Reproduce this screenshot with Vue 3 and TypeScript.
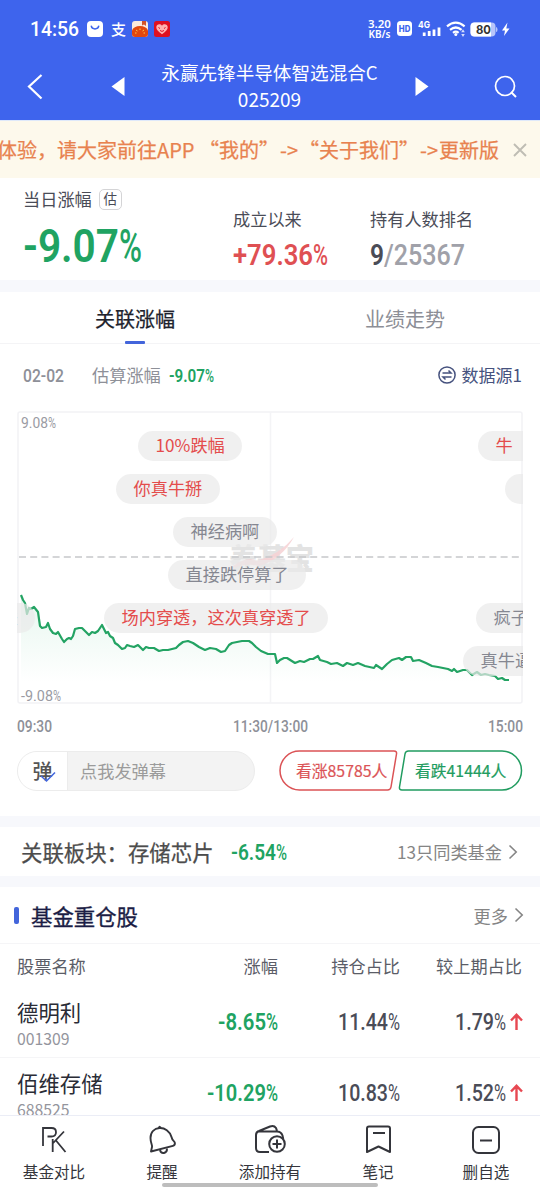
<script setup lang="ts">
import { h, type FunctionalComponent } from 'vue'

interface FigureProps {
  t: string
  s: number
  w: number
  p?: number
  wt?: number
}

// Condensed figures: the digits fill `w`, an optional percent sign fills `p`.
const Figure: FunctionalComponent<FigureProps> = (props) => {
  const { t, s, w, p = 0, wt = 600 } = props
  const y = s * 0.86
  const common = { y, 'font-size': s, lengthAdjust: 'spacingAndGlyphs', fill: 'currentColor' }
  const kids = [h('text', { ...common, x: 0, textLength: w, 'font-weight': wt }, t)]
  if (p) kids.push(h('text', { ...common, x: w, textLength: p, 'font-weight': wt > 500 ? 500 : 400 }, '%'))
  return h('svg', { class: 'fig', width: w + p, height: s }, kids)
}
Figure.props = ['t', 's', 'w', 'p', 'wt']

const bubbles = [
  { text: '10%跌幅', cls: 'b1 red' },
  { text: '牛', cls: 'b2 red' },
  { text: '你真牛掰', cls: 'b3 red' },
  { text: '', cls: 'b4' },
  { text: '神经病啊', cls: 'b5' },
  { text: '直接跌停算了', cls: 'b6' },
  { text: '场内穿透，这次真穿透了', cls: 'b7 red' },
  { text: '疯子', cls: 'b8' },
  { text: '真牛逼', cls: 'b9' },
  { text: '跌', cls: 'b10' },
]

const line =
  '3,182 5,187 7,190 9,201 11,195 13,196 16,194 20,199 22,213 24,215 28,214 30,210 32,216 35,220 38,221 40,219 44,226 46,229 49,226 51,225 53,226 55,223 57,216 61,215 64,215 68,219 71,222 74,219 77,220 80,218 84,212 88,220 90,219 92,223 95,225 97,230 100,232 104,236 107,235 109,232 112,233 116,234 120,232 123,235 125,237 128,234 131,235 136,235 141,238 145,237 150,237 154,236 158,235 161,232 165,229 170,228 175,230 181,234 187,237 192,235 198,236 203,239 207,238 211,232 214,230 219,229 224,228 231,228 234,230 238,234 243,238 250,241 257,241 259,250 262,247 266,245 269,245 277,250 282,248 286,249 292,246 295,246 300,243 302,247 309,249 313,251 319,250 325,253 329,250 335,252 340,250 347,253 356,255 358,252 364,256 369,251 374,247 381,245 384,247 388,244 393,244 395,248 401,247 408,250 414,253 420,254 430,256 434,258 436,256 439,259 445,257 449,257 454,262 459,259 463,262 467,261 471,262 477,263 480,266 484,265 487,267 491,267'

const stocks = [
  { name: '德明利', code: '001309', chg: '-8.65', cw: 48, pos: '11.44', diff: '1.79' },
  { name: '佰维存储', code: '688525', chg: '-10.29', cw: 59, pos: '10.83', diff: '1.52' },
]
</script>

<template>
  <div class="page">
    <header class="top">
      <div class="status">
        <Figure class="clock" t="14:56" :s="20" :w="49" :wt="500" />
        <svg class="s-bag" width="16" height="16" viewBox="0 0 16 16"><rect width="16" height="16" rx="4" fill="#fff" /><path d="M4.300 5.200c.6 3.600 6.800 3.600 7.400 0" fill="none" stroke="#3e64ed" stroke-width="1.500" stroke-linecap="round" /></svg>
        <span class="s-zhi">支</span>
        <svg class="s-app" width="16" height="16" viewBox="0 0 16 16"><rect width="16" height="16" rx="3" fill="#fbe9dc" /><path d="M0 12V9.500C1 6.500 4 5 8 5s7 1.500 8 4.500V13q0 3-3 3H3q-3 0-3-3z" fill="#e2470f" /><path d="M10 0h4v5l-2-1.500-2 1z" fill="#d4532a" /><path d="M4 9l1.500 1M8 7.500V9M12 9l-1.500 1M3 12h1.500M11.500 12H13" stroke="#ffc94a" stroke-width="1" /></svg>
        <svg class="s-heart" width="16" height="16" viewBox="0 0 16 16"><rect width="16" height="16" rx="2.500" fill="#df1021" /><path d="M8 13.300C4 10.500 2.300 8.700 2.300 6.300c0-3.200 4-4.200 5.700-1.600 1.700-2.600 5.700-1.600 5.700 1.600 0 2.400-1.700 4.200-5.700 7z" fill="#ffb3b0" /><path d="M4.500 6.500l1.500 1M11.500 6.500l-1.500 1M6 9.500q2 1.800 4 0" fill="none" stroke="#df1021" /></svg>
        <div class="speed"><span>3.20</span><span class="unit">KB/s</span></div>
        <svg class="s-right" width="144" height="20" viewBox="0 0 144 20">
          <rect x="0" y="2" width="15" height="15" rx="3.500" fill="#fff" />
          <text x="1.800" y="12.500" font-size="8.500" font-weight="800" fill="#3e64ed" textLength="11.500" lengthAdjust="spacingAndGlyphs">HD</text>
          <text x="21" y="9" font-size="9.500" font-weight="700" fill="#fff" textLength="12" lengthAdjust="spacingAndGlyphs">4G</text>
          <path d="M27.200 17v-3.500M32.200 17v-5M37 17v-6.500M42 17v-8.500" stroke="#fff" stroke-width="2.800" />
          <g fill="none" stroke="#fff" stroke-width="2.200"><path d="M50 7.300q8.800-7.300 17.600 0" /><path d="M53 10.800q5.800-4.600 11.600 0" /><path d="M56 13.800q2.800-2.200 5.600 0" /></g>
          <circle cx="58.800" cy="15.500" r="1.500" fill="#fff" />
          <path d="M66 10.300l1.800 3h-3.600zM66 18l1.800-3h-3.600z" fill="#d5defc" />
          <rect x="73.500" y="3.500" width="25" height="14" rx="4" fill="#b7c5fa" /><path d="M77.500 3.500H94v14H77.500q-4 0-4-4v-6q0-4 4-4z" fill="#fff" /><path d="M99 8q1.500 0 1.500 2.500T99 13z" fill="#b7c5fa" />
          <text x="79" y="14.500" font-size="11.500" font-weight="700" fill="#343434" textLength="15" lengthAdjust="spacingAndGlyphs">80</text>
          <path d="M110.500 3.500l-5.500 8h3l-1 5.500 5.500-7.500h-3.200z" fill="#fff" />
        </svg>
      </div>
      <div class="nav">
        <svg class="back" width="18" height="28" viewBox="0 0 18 28"><path d="M15.500 2L3 13.500l12.500 12" fill="none" stroke="#fff" stroke-width="2.200" /></svg>
        <svg class="prev" width="14" height="20" viewBox="0 0 14 20"><path d="M13.500 0v19L.5 9.500z" fill="#fff" /></svg>
        <div class="title"><span class="fund">永赢先锋半导体智选混合C</span><span class="num">025209</span></div>
        <svg class="next" width="14" height="20" viewBox="0 0 14 20"><path d="M.5 0v19l13-9.500z" fill="#fff" /></svg>
        <svg class="search" width="24" height="24" viewBox="0 0 24 24"><circle cx="12" cy="11" r="9.500" fill="none" stroke="#fff" stroke-width="1.700" /><path d="M18 17l5 5" stroke="#fff" stroke-width="2" /></svg>
      </div>
    </header>

    <main class="body">
      <div class="notice">
        <span class="notice-text">体验，请大家前往APP “我的”<i>-&gt;</i>“关于我们”<i>-&gt;</i>更新版</span>
        <svg class="close" width="14" height="14" viewBox="0 0 14 14"><path d="M1 1l12 12M13 1L1 13" stroke="#bfbdb4" stroke-width="1.900" /></svg>
      </div>

      <section class="summary">
        <div class="day">
          <div class="label">当日涨幅<span class="tag">估</span></div>
          <Figure class="green" t="-9.07" :s="46" :w="96" :p="23" :wt="600" />
        </div>
        <div class="since">
          <div class="label">成立以来</div>
          <Figure class="red" t="+79.36" :s="29" :w="80" :p="15" />
        </div>
        <div class="rank">
          <div class="label">持有人数排名</div>
          <div class="rank-num"><Figure t="9" :s="29" :w="14" :wt="600" /><Figure class="gray" t="/25367" :s="29" :w="81" :wt="500" /></div>
        </div>
      </section>

      <section class="chart-card">
        <div class="tabs"><div class="tab active">关联涨幅</div><div class="tab">业绩走势</div></div>
        <div class="info">
          <Figure class="date" t="02-02" :s="18" :w="41" :wt="500" />
          <span class="est">估算涨幅</span>
          <Figure class="green rate" t="-9.07" :s="17.500" :w="36" :p="9" />
          <svg class="swap" width="18" height="18" viewBox="0 0 18 18" fill="none" stroke="#46527e" stroke-width="1.500"><circle cx="9" cy="9" r="8.100" /><path d="M4.500 7H13L10.500 4.500M13.500 11H5l2.500 2.500" /></svg>
          <span class="source">数据源1</span>
        </div>
        <div class="chart">
          <svg class="plot" width="506" height="293" viewBox="0 0 506 293">
            <defs><linearGradient id="fade" x1="0" y1="0" x2="0" y2="1"><stop offset="0" stop-color="#20b26b" stop-opacity=".11" /><stop offset=".85" stop-color="#20b26b" stop-opacity="0" /></linearGradient></defs>
            <rect x="1" y="1" width="504" height="291" rx="2" fill="none" stroke="#f2f2f5" stroke-width="1.500" />
            <path d="M253.500 1v291" stroke="#f4f4f6" stroke-width="1.500" />
            <text class="mark" x="212" y="158.500" font-size="29" font-weight="900" fill="#e3e3e3" textLength="85" lengthAdjust="spacingAndGlyphs">养基宝</text>
            <path d="M210 160q17-16 30-10 23-7 37-24-12 22-35 29-15-4-32 5z" fill="#f6d1d3" opacity=".85" />
            <path d="M2 146h503" stroke="#c6c7ca" stroke-width="1.300" stroke-dasharray="7 4.200" />
            <polygon :points="`${line} 491,285 3,285`" transform="translate(1 2)" fill="url(#fade)" />
            <polyline :points="line" transform="translate(1 2)" fill="none" stroke="#23a363" stroke-width="2.200" stroke-linejoin="round" />
          </svg>
          <Figure class="max" t="9.08" :s="15.500" :w="27" :p="8" :wt="400" />
          <Figure class="min" t="-9.08" :s="15.500" :w="32" :p="8" :wt="400" />
          <div v-for="b in bubbles" :key="b.cls" class="bubble" :class="b.cls">{{ b.text }}</div>
        </div>
        <div class="times">
          <Figure t="09:30" :s="16" :w="35" :wt="500" />
          <Figure t="11:30/13:00" :s="16" :w="75" :wt="500" />
          <Figure t="15:00" :s="16" :w="35" :wt="500" />
        </div>
        <div class="actions">
          <div class="send">
            <div class="toggle">弹<svg class="tick" width="18" height="12" viewBox="0 0 18 12"><path d="M2 5l5.500 5L16 1.500" fill="none" stroke="#4468df" stroke-width="1.600" /></svg></div>
            <div class="placeholder">点我发弹幕</div>
          </div>
          <div class="vote up">
            <svg width="119" height="41" viewBox="0 0 119 41"><path d="M20.500 1H115q3 0 2.500 3L112 37q-.5 3-3.500 3H20.500a19.500 19.500 0 0 1 0-39z" fill="none" stroke="#db5356" stroke-width="1.500" /></svg>
            <span>看涨85785人</span>
          </div>
          <div class="vote down">
            <svg width="125" height="41" viewBox="0 0 125 41"><path d="M104 1H10.500Q7.500 1 7 4L1.500 37q-.5 3 2.500 3H104a19.500 19.500 0 0 0 0-39z" fill="none" stroke="#219c60" stroke-width="1.500" /></svg>
            <span>看跌41444人</span>
          </div>
        </div>
      </section>

      <section class="sector">
        <span class="sector-name">关联板块：存储芯片</span>
        <Figure class="green" t="-6.54" :s="22" :w="45" :p="11" />
        <span class="more">13只同类基金</span>
        <svg width="10" height="16" viewBox="0 0 10 16"><path d="M1.500 1.500L8.200 8l-6.700 6.500" fill="none" stroke="#858585" stroke-width="1.600" /></svg>
      </section>

      <section class="holdings">
        <div class="head">
          <span class="bar"></span><h2>基金重仓股</h2><span class="more">更多</span>
          <svg width="10" height="16" viewBox="0 0 10 16"><path d="M1.500 1.500L8.200 8l-6.700 6.500" fill="none" stroke="#858585" stroke-width="1.600" /></svg>
        </div>
        <div class="row cols"><span>股票名称</span><span>涨幅</span><span>持仓占比</span><span>较上期占比</span></div>
        <div v-for="s in stocks" :key="s.code" class="row stock">
          <div class="who"><span class="name">{{ s.name }}</span><span class="code">{{ s.code }}</span></div>
          <div><Figure class="green" :t="s.chg" :s="23" :w="s.cw" :p="12" /></div>
          <div><Figure :t="s.pos" :s="23" :w="50" :p="12" :wt="500" /></div>
          <div class="diff">
            <Figure :t="s.diff" :s="23" :w="39" :p="12" :wt="500" />
            <svg class="arrow" width="13" height="18" viewBox="0 0 13 18"><path d="M6.500 17V2M1 7.500l5.500-5.700L12 7.500" fill="none" stroke="#e74852" stroke-width="2.400" /></svg>
          </div>
        </div>
      </section>
    </main>

    <footer class="tabbar">
      <div class="item"><svg width="32" height="32" viewBox="0 0 32 32" fill="none" stroke="#34353b" stroke-width="1.800"><path d="M5 22V4h8.500q4.500 0 4.500 4.200t-4.500 4.300H9.500M14.700 15v13M26 7.500L14.700 19.500M18 16.500L27.500 28" /></svg><span>基金对比</span></div>
      <div class="item"><svg width="32" height="32" viewBox="0 0 32 32" fill="none" stroke="#34353b" stroke-width="1.900" stroke-linejoin="round"><path d="M5 27.500l1-4.500c.5-2-1.500-4-1.500-9C4.500 8 8.500 4.500 13.500 4S24 7.500 25.500 13c1 4.500 3.200 3.800 3.400 6 .1 1.800-.5 2.500-2 2.900z" /><path d="M12.500 4l1-1.200 1.300 1M14 26q.8 3.500 4 3 3.200-.800 3-4.500" /></svg><span>提醒</span></div>
      <div class="item"><svg width="34" height="32" viewBox="0 0 34 32" fill="none" stroke="#34353b" stroke-width="2"><path d="M16 28H7q-4 0-4-4V11q0-3 3-4l11-4.500q4-1.500 6 1.500l1 2.800M4 7.500h20q4 0 5.500 4l.8 4" /><circle cx="24" cy="20" r="7.800" fill="#fff" /><path d="M19.500 20h9M24 15.500v9" /></svg><span>添加持有</span></div>
      <div class="item"><svg width="32" height="32" viewBox="0 0 32 32" fill="none" stroke="#34353b" stroke-width="2" stroke-linejoin="round"><path d="M7 2.500h19q2 0 2 2V28l-11.500-5.500L5 28V4.500q0-2 2-2zM11 9h12" /></svg><span>笔记</span></div>
      <div class="item"><svg width="32" height="32" viewBox="0 0 32 32" fill="none" stroke="#34353b" stroke-width="2"><rect x="3" y="3" width="26" height="26" rx="5.500" /><path d="M10 16.500h12" /></svg><span>删自选</span></div>
      <div class="home"></div>
    </footer>
  </div>
</template>

<style>
body { margin: 0; background: #fff; }
.fig { display: block; flex: none; overflow: visible; font-family: Roboto, "Liberation Sans", sans-serif; }
</style>

<style scoped>
.page { width: 540px; height: 1188px; display: flex; flex-direction: column; overflow: hidden; background: #fff; color: #4a4c57; font-family: "Noto Sans CJK SC", sans-serif; }
.page svg { flex: none; display: block; }
.green { color: #20a362; }
.red { color: #df5053; }
.gray { color: #a0a1a9; }

.top { height: 120px; flex: none; background: #3e64ed; color: #fff; }
.status { height: 40px; padding: 18px 0 0 30px; box-sizing: border-box; display: flex; align-items: center; }
.s-bag { margin-left: 8px; }
.s-zhi { margin-left: 8px; width: 16px; font-size: 15px; line-height: 20px; font-weight: 500; }
.s-app { margin-left: 6px; }
.s-heart { margin-left: 6px; }
.speed { margin-left: 198px; width: 25px; display: flex; flex-direction: column; align-items: center; font: 600 11.5px/10px "Noto Sans", sans-serif; white-space: nowrap; }
.unit { font-size: 10px; line-height: 10px; }
.s-right { margin-left: 6px; font-family: Inter, sans-serif; }
.nav { height: 80px; display: flex; align-items: center; box-sizing: border-box; padding: 13px 23px 0 26px; }
.prev { margin-left: 67px; }
.title { width: 289px; display: flex; flex-direction: column; align-items: center; text-align: center; padding-bottom: 2px; }
.fund { font-size: 18.6px; line-height: 26px; }
.num { font-size: 19px; line-height: 27px; }
.next { margin-left: 1px; }
.search { margin-left: auto; }

.body { flex: 1; min-height: 0; overflow: hidden; background: #f7f8fc; }
.notice { height: 58px; box-sizing: border-box; border-top: 1px solid #dfe9fa; background: #fdf9ec; display: flex; align-items: center; justify-content: flex-end; padding-right: 13px; overflow: hidden; }
.notice-text { flex: none; white-space: nowrap; font-size: 20px; line-height: 30px; color: #e8824f; -webkit-text-stroke: .25px currentColor; padding-top: 1px; }
.notice-text i { font-style: normal; display: inline-block; width: 20px; text-align: center; }
.close { margin-left: 14px; }

.summary { height: 102px; background: #fff; display: grid; grid-template-columns: 210px 137px 1fr; padding-left: 23px; }
.label { font-size: 17.2px; line-height: 24px; display: flex; align-items: center; }
.day { padding-top: 9px; }
.day .fig { margin-top: 11px; }
.tag { box-sizing: border-box; width: 23px; height: 21px; margin-left: 7px; border: 1.5px solid #d4d4d6; border-radius: 5px; font-size: 13.5px; line-height: 17px; text-align: center; }
.since, .rank { padding-top: 29px; }
.since .fig, .rank-num { margin-top: 9px; }
.rank-num { display: flex; }

.chart-card { margin-top: 12px; height: 524px; background: #fff; }
.tabs { height: 52px; box-sizing: border-box; display: flex; border-bottom: 1px solid #f4f4f6; }
.tab { flex: 1; position: relative; text-align: center; font-size: 20px; line-height: 53px; color: #8c8e96; }
.tab.active { color: #20222c; -webkit-text-stroke: .25px currentColor; }
.tab.active::after { content: ""; position: absolute; left: 125px; bottom: -1px; width: 20px; height: 3px; border-radius: 1px; background: #4365db; }
.info { height: 67px; display: flex; align-items: center; padding: 0 18px 6px 23px; box-sizing: border-box; color: #8e9098; }
.date { margin-top: 3px; }
.rate { margin-top: 2px; }
.est { margin: 0 8px 0 28px; font-size: 17.2px; }
.swap { margin-left: auto; margin-right: 6px; }
.source { font-size: 17px; color: #46527e; }
.chart { position: relative; width: 506px; height: 293px; margin-left: 17px; overflow: hidden; color: #9a9ba3; }
.plot { font-family: "Noto Sans CJK SC", sans-serif; }
.max { position: absolute; left: 4px; top: 4px; }
.min { position: absolute; left: 4px; top: 277px; }
.bubble { position: absolute; height: 30px; box-sizing: border-box; padding: 0 17.5px; border-radius: 15px; background: rgba(234, 234, 234, .7); font-size: 17.2px; line-height: 28px; white-space: nowrap; color: #858791; }
.bubble.red { color: #e44c4c; }
.b1 { left: 121px; top: 20px; }
.b2 { left: 461px; top: 20px; width: 70px; }
.b3 { left: 99px; top: 63px; }
.b4 { left: 488px; top: 63px; width: 60px; }
.b5 { left: 156px; top: 106px; }
.b6 { left: 151px; top: 149px; }
.b7 { left: 87px; top: 192px; }
.b8 { left: 459px; top: 192px; }
.b9 { left: 446px; top: 235px; }
.b10 { left: -34px; top: 192px; }
.times { height: 46px; box-sizing: border-box; padding: 0 17px 2px; display: flex; align-items: center; justify-content: space-between; color: #8e9098; }
.actions { display: flex; align-items: center; height: 41px; padding-left: 17px; }
.send { width: 238px; height: 40px; box-sizing: border-box; border: 1px solid #ececec; border-radius: 20px; display: flex; overflow: hidden; background: #f3f3f3; }
.toggle { position: relative; width: 49px; background: #fff; border-right: 1px solid #ececec; text-align: center; font-size: 20px; line-height: 37px; font-weight: 500; color: #555; }
.tick { position: absolute; left: 21px; top: 19px; }
.placeholder { margin-left: 12px; font-size: 17.2px; line-height: 38px; color: #9b9b9b; }
.vote { position: relative; height: 41px; font-size: 15.8px; -webkit-text-stroke: .2px currentColor; }
.vote span { position: absolute; top: 0; line-height: 42px; white-space: nowrap; }
.up { margin-left: 24px; width: 119px; color: #db5356; }
.up span { left: 17px; }
.down { width: 125px; color: #219c60; }
.down span { left: 17px; }

.sector { margin-top: 11px; height: 49px; background: #fff; display: flex; align-items: center; padding: 0 22px 0 21px; box-sizing: border-box; }
.sector-name { font-size: 21.4px; -webkit-text-stroke: .25px currentColor; color: #4c4c4c; margin-right: 17px; }
.more { margin-left: auto; margin-right: 6px; font-size: 17.2px; color: #858585; }

.holdings { margin-top: 11px; background: #fff; }
.head { height: 57px; box-sizing: border-box; border-bottom: 1px solid #f5f5f7; display: flex; align-items: center; padding: 0 16px 0 14px; }
.bar { width: 5px; height: 17px; border-radius: 2px; background: #4365db; }
h2 { margin: 0 0 0 12px; font-size: 21.4px; font-weight: 400; -webkit-text-stroke: .35px currentColor; color: #1b1d45; line-height: 30px; padding-top: 2px; }
.row { display: grid; grid-template-columns: 140px 121px 122px 122px; padding: 0 18px 0 17px; align-items: center; }
.row > * { display: flex; justify-content: flex-end; }
.row > :first-child { justify-content: flex-start; }
.cols { height: 43px; font-size: 17.2px; color: #5b5d67; }
.stock { height: 71px; box-sizing: border-box; border-bottom: 1px solid #f5f5f7; padding-bottom: 1px; }
.row > .who { flex-direction: column; padding-top: 2px; }
.name { font-size: 21.4px; line-height: 30px; color: #2a2c36; }
.code { font-size: 15.8px; line-height: 21px; color: #94959d; padding-top: 1px; }
.diff { margin-right: -1px; }
.arrow { margin: 3px 0 0 4px; }

.tabbar { position: relative; height: 73px; flex: none; box-sizing: border-box; border-top: 1px solid #ebedf6; background: #fff; display: flex; }
.item { flex: 1; display: flex; flex-direction: column; align-items: center; padding-top: 8px; font-size: 15.6px; line-height: 22px; color: #34353b; }
.item span { margin-top: 4px; }
.home { position: absolute; left: 162px; bottom: 1px; width: 216px; height: 4px; border-radius: 2px; background: #bdbdbd; }
</style>
